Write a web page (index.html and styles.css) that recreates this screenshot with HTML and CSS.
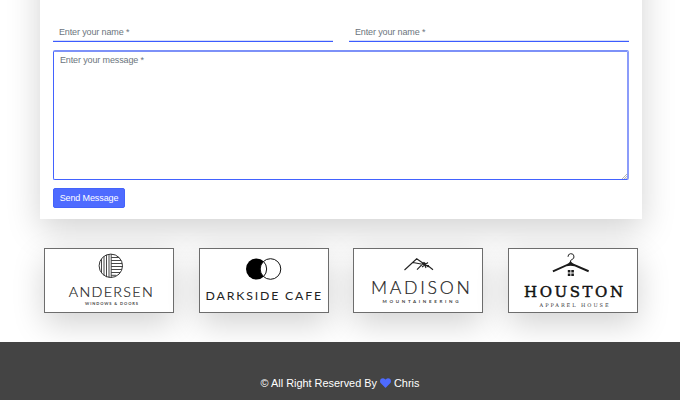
FILE: index.html
```html
<!DOCTYPE html>
<html lang="en">
<head>
<meta charset="utf-8">
<title>Contact</title>
<link rel="stylesheet" href="styles.css">
</head>
<body>
<main>
  <form class="card">
    <div class="row">
      <input class="field" type="text" placeholder="Enter your name *">
      <input class="field" type="text" placeholder="Enter your name *">
    </div>
    <div class="message-wrap">
      <textarea class="message" placeholder="Enter your message *"></textarea>
      <svg class="grip" viewBox="0 0 6 6"><path d="M0 6L6 0M2.500 6L6 2.500M4.500 6L6 4.500"/></svg>
    </div>
    <button class="send" type="button">Send Message</button>
  </form>
  <section class="brands">
    <div class="brand">
      <svg viewBox="0 0 128 63">
        <g fill="none" stroke="#333" stroke-width=".9">
          <circle cx="65.800" cy="16.800" r="11.700" stroke-width="1"/>
          <path d="M56.500 10v14M59 7.500v19M61.500 6v22M64 5.500v23M66.200 5v23.500M66.200 8.500h8M66.200 11.500h10M66.200 14.500h11M66.200 17.500h11.500M66.200 20.500h10.500M66.200 23.500h9M66.200 26.300h5"/>
        </g>
        <text class="lato thin" x="23.700" y="47.700" font-size="14.300" textLength="84">ANDERSEN</text>
        <text class="lato small" x="40" y="56.300" font-size="4" textLength="53">WINDOWS &amp; DOORS</text>
      </svg>
    </div>
    <div class="brand">
      <svg viewBox="0 0 128 63">
        <circle cx="56.500" cy="20" r="10.500"/>
        <circle cx="70.500" cy="20" r="10.300" fill="#fff" stroke="#111"/>
        <path d="M63.500 12.500a10.500 10.500 0 0 1 0 15" fill="none" stroke="#111"/>
        <text class="lato" x="5.600" y="50.600" font-size="12.300" textLength="115.500">DARKSIDE CAFE</text>
      </svg>
    </div>
    <div class="brand">
      <svg viewBox="0 0 128 63">
        <path d="M50.500 21L62.700 9.800L74.500 18M59 13.500L75 16.500M63 20.700L70 13.500L79 20.700M68 18L74 13.500M70 14L72 19" fill="none" stroke="#222" stroke-width="1.100"/>
        <text class="lato thin" x="16.900" y="45" font-size="17.700" textLength="99">MADISON</text>
        <text class="lato small" x="28.500" y="53.500" font-size="4.500" textLength="76">MOUNTAINEERING</text>
      </svg>
    </div>
    <div class="brand">
      <svg viewBox="0 0 128 63">
        <path d="M59 7.800a3 3 0 1 1 4 2.700c-1.500.7-1.500 1-1.500 3" fill="none" stroke="#222" stroke-width="1"/>
        <path d="M61.500 11.500c1 2.500 2.500 3 5 4L80 21.300l-.7 1.900L65.500 17.300q-4-1.200-8 0L44.300 23.200l-.8-1.800L57 15.500c2.500-1 3.500-1.500 4.500-4Z" fill="#1a1a1a"/>
        <path d="M58.800 21h2.600v2.600h-2.600zM62.300 21h2.600v2.600h-2.600zM58.800 24.500h2.600v2.600h-2.600zM62.300 24.500h2.600v2.600h-2.600z" fill="#1a1a1a"/>
        <text class="slab" x="15" y="47.800" font-size="15" textLength="99">HOUSTON</text>
        <text class="slab-small" x="30.600" y="57.500" font-size="5" textLength="69">APPAREL HOUSE</text>
      </svg>
    </div>
  </section>
</main>
<footer class="footer">
  <span>© All Right Reserved By</span>
  <svg class="heart" viewBox="0 0 512 448"><path d="M462 30C407-16 326-8 276 44l-20 20-20-20C186-8 105-16 50 30-13 84-16 181 40 239l193 199c13 13 33 13 46 0l193-199c56-58 53-155-10-209Z"/></svg>
  <span>Chris</span>
</footer>
</body>
</html>
```
FILE: styles.css
```css
* { box-sizing: border-box; }
body {
  margin: 0;
  height: 400px;
  overflow: hidden;
  background: #fff;
  font-family: "Liberation Sans", Arial, sans-serif;
}
main {
  height: 342px;
  overflow: hidden;
}
.card {
  width: 602px;
  height: 279px;
  margin: -60px 0 0 40px;
  padding: 82px 13px 0;
  background: #fff;
  box-shadow: 0 11px 32px rgba(0, 0, 0, .175);
}
.row {
  display: grid;
  grid-template-columns: 1fr 1fr;
  gap: 16px;
}
.field {
  width: 100%;
  height: 20px;
  padding: 0 6px;
  border: 0;
  border-bottom: 1px solid #3c5cff;
  outline: 0;
  background: transparent;
  box-shadow: inset 0 -1px #d8ddf8;
  font: 9px/18px "Liberation Sans", Arial, sans-serif;
  letter-spacing: -.13px;
}
.message-wrap {
  position: relative;
  margin-top: 8px;
}
.message {
  display: block;
  width: 100%;
  height: 130px;
  padding: 2px 6px;
  border: 1px solid #4262ff;
  border-top: 2px solid #7d91f8;
  border-right: 2px solid #8b9cfa;
  border-radius: 2px;
  outline: 0;
  resize: none;
  font: 9px/13px "Liberation Sans", Arial, sans-serif;
  letter-spacing: -.13px;
}
.grip {
  position: absolute;
  right: 2px;
  bottom: 1px;
  width: 5px;
  height: 5px;
  fill: none;
  stroke: #999;
  stroke-width: .9;
}
::placeholder {
  color: #6c757d;
  opacity: 1;
}
.send {
  display: block;
  width: 72px;
  height: 20px;
  margin-top: 8px;
  padding: 0;
  border: 1px solid #4463fa;
  border-radius: 2px;
  background: #4e6bff;
  color: #fff;
  font: 9px/17px "Liberation Sans", Arial, sans-serif;
  letter-spacing: -.12px;
}
.brands {
  display: grid;
  grid-template-columns: repeat(4, 130px);
  justify-content: space-between;
  margin: 29px 42.500px 0 44px;
}
.brand {
  height: 65px;
  border: 1px solid #6d6d6d;
  background: #fff;
  box-shadow: 0 11px 32px rgba(0, 0, 0, .175);
}
.brand svg {
  display: block;
  width: 128px;
  height: 63px;
}
.lato { font-family: Lato, sans-serif; fill: #222; }
.thin { font-weight: 300; stroke: #222; stroke-width: .2; }
.small { font-weight: 700; fill: #444; }
.slab { font-family: "DejaVu Serif", serif; fill: #111; stroke: #111; stroke-width: .45; }
.slab-small { font-family: "DejaVu Serif", serif; fill: #333; }
.footer {
  display: flex;
  justify-content: center;
  align-items: center;
  gap: 3px;
  height: 58px;
  padding-top: 23px;
  background: #444;
  color: #fff;
  font-size: 10.900px;
}
.heart {
  width: 11px;
  height: 10px;
  fill: #4e6bff;
}
```
